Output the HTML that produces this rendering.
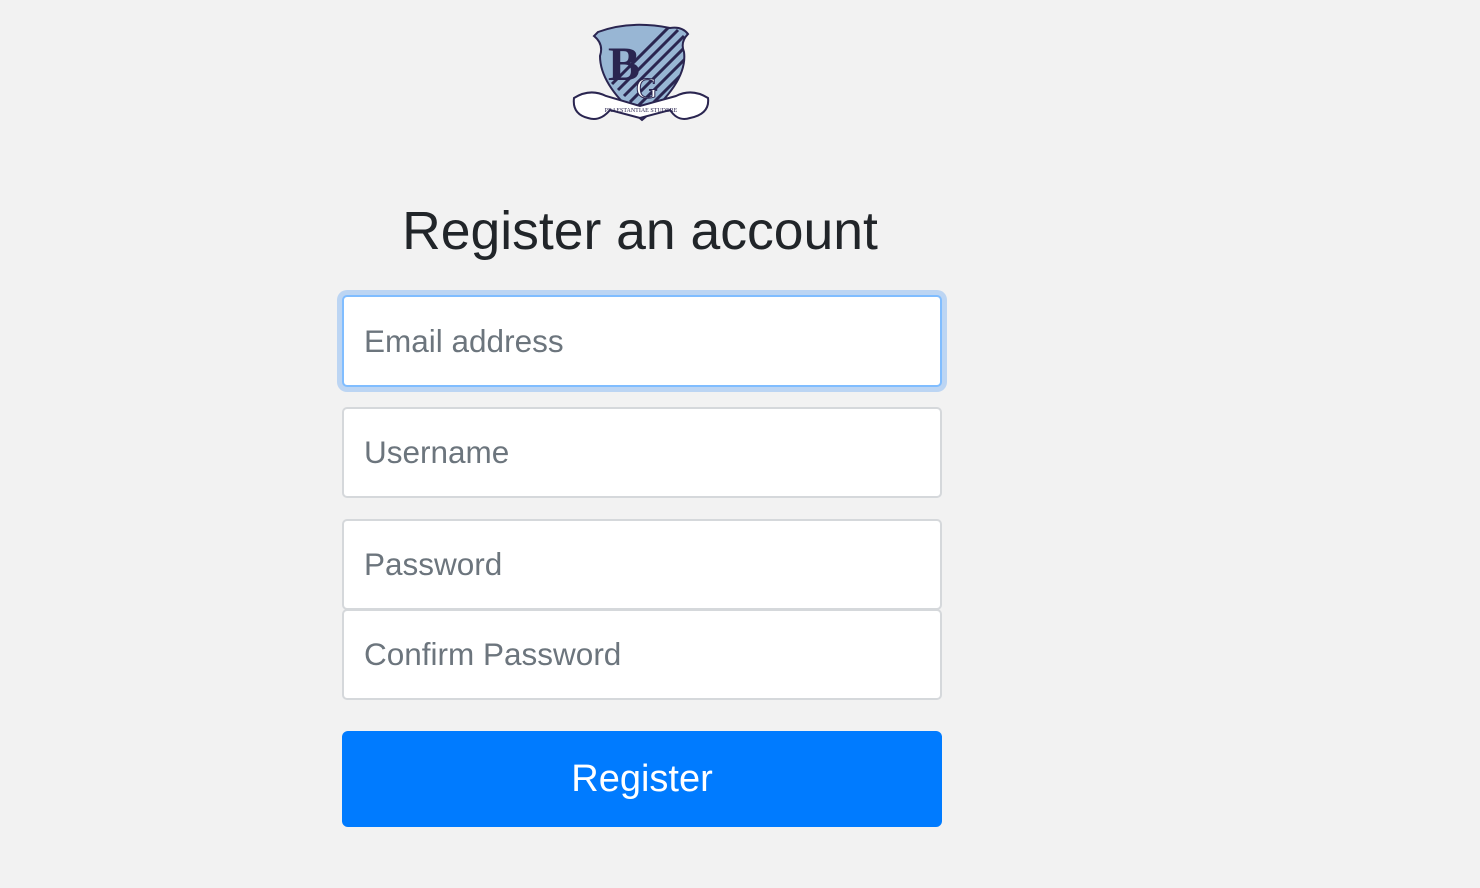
<!DOCTYPE html>
<html><head><meta charset="utf-8"><style>
body{margin:0;background:#f2f2f2;font-family:"Liberation Sans",sans-serif;width:1480px;height:888px;position:relative;overflow:hidden}
h1{position:absolute;left:0;width:1280px;top:199px;margin:0;text-align:center;font-weight:400;font-size:53.5px;color:#212529;line-height:66px}
.in{position:absolute;left:342px;width:600px;box-sizing:border-box;background:#fff;border:2px solid #d5d8db;border-radius:5px;font-size:31.5px;color:#6c757d;padding-left:20px;display:flex;align-items:center}
.btn{position:absolute;left:342px;top:731px;width:600px;height:96px;background:#007bff;border-radius:6px;color:#fff;font-size:38px;display:flex;align-items:center;justify-content:center}
</style></head><body>
<svg style="position:absolute;left:570px;top:22px" width="142" height="106" viewBox="0 0 142 106">
<defs><clipPath id="c"><path d="M28 10 Q60 -2 100 6 Q112 4 118 12 Q110 20 114 30 Q118 60 72 98 Q30 64 30 34 Q34 22 24 14 Z"/></clipPath></defs>
<path d="M28 10 Q60 -2 100 6 Q112 4 118 12 Q110 20 114 30 Q118 60 72 98 Q30 64 30 34 Q34 22 24 14 Z" fill="#98b6d4" stroke="#2a2550" stroke-width="2"/>
<g clip-path="url(#c)" stroke="#2a2550" stroke-width="3">
<line x1="60" y1="80" x2="120" y2="20"/><line x1="66" y1="86" x2="126" y2="26"/><line x1="54" y1="74" x2="114" y2="14"/><line x1="72" y1="92" x2="132" y2="32"/><line x1="48" y1="68" x2="108" y2="8"/><line x1="78" y1="98" x2="138" y2="38"/><line x1="42" y1="62" x2="102" y2="2"/>
</g>
<text x="38" y="58" font-family="Liberation Serif,serif" font-size="48" font-weight="bold" fill="#2a2550">B</text>
<text x="66" y="76" font-family="Liberation Serif,serif" font-size="30" fill="#fff" stroke="#2a2550" stroke-width="1">G</text>
<path d="M4 76 Q20 66 36 74 L70 84 L106 74 Q122 66 138 76 Q140 92 120 96 Q108 100 100 88 L70 96 L40 88 Q30 100 18 96 Q2 92 4 76Z" fill="#fff" stroke="#2a2550" stroke-width="2"/>
<text x="71" y="90" text-anchor="middle" font-family="Liberation Serif,serif" font-size="6" fill="#2a2550">PRAESTANTIAE STUDERE</text>
</svg>
<h1>Register an account</h1>
<div class="in" style="top:295px;height:92px;border-color:#80bdff;box-shadow:0 0 0 5px #bcd5f3">Email address</div>
<div class="in" style="top:407px;height:91px">Username</div>
<div class="in" style="top:519px;height:91px">Password</div>
<div class="in" style="top:609px;height:91px">Confirm Password</div>
<div class="btn">Register</div>
</body></html>
